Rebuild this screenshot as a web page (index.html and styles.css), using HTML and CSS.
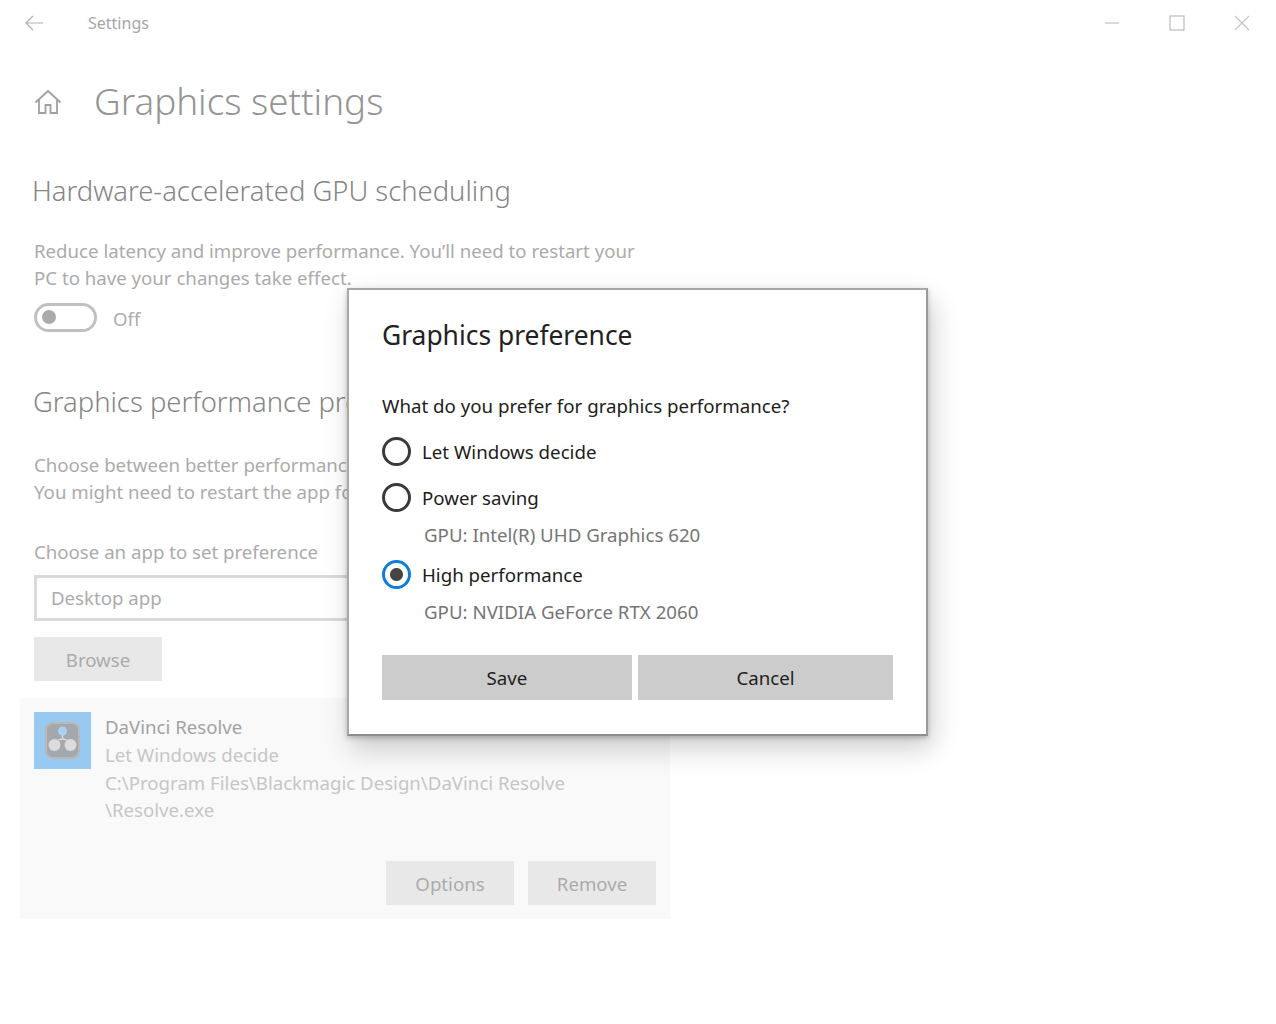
FILE: index.html
```html
<!DOCTYPE html>
<html lang="en">
<head>
<meta charset="utf-8">
<title>Settings</title>
<link rel="stylesheet" href="styles.css">
</head>
<body>
<div class="window">
  <header class="titlebar">
    <svg class="back" width="20" height="16" viewBox="0 0 20 16"><path d="M19 8H2M9 1L2 8l7 7" fill="none" stroke="#b0b0b0" stroke-width="1.200"/></svg>
    <span class="app-name">Settings</span>
    <div class="controls">
      <svg width="16" height="16" viewBox="0 0 16 16"><path d="M1 8h14" stroke="#c4c4c4" stroke-width="1.200"/></svg>
      <svg width="16" height="16" viewBox="0 0 16 16"><rect x="1" y="1" width="14" height="14" fill="none" stroke="#bbb" stroke-width="1.200"/></svg>
      <svg width="16" height="16" viewBox="0 0 16 16"><path d="M1 1l14 14M15 1L1 15" stroke="#c4c4c4" stroke-width="1.100"/></svg>
    </div>
  </header>
  <main class="content">
    <div class="page-head">
      <svg class="home" width="28" height="28" viewBox="0 0 28 28"><path d="M1.500 14.500L14 3l12.500 11.500M5 11.500V25h6.500v-8h5v8H23V11.500" fill="none" stroke="#a0a0a0" stroke-width="1.800"/></svg>
      <h1>Graphics settings</h1>
    </div>
    <h2 class="hw">Hardware-accelerated GPU scheduling</h2>
    <p class="desc first">Reduce latency and improve performance. You’ll need to restart your<br>PC to have your changes take effect.</p>
    <div class="toggle-row">
      <span class="toggle"><span class="knob"></span></span>
      <span class="toggle-label">Off</span>
    </div>
    <h2 class="perf">Graphics performance preference</h2>
    <p class="desc second">Choose between better performance or battery life when using an app.<br>You might need to restart the app for your changes to take effect.</p>
    <p class="desc chooser">Choose an app to set preference</p>
    <div class="select">Desktop app</div>
    <button class="btn browse">Browse</button>
    <section class="app-card">
      <div class="app-top">
        <div class="app-icon">
          <svg width="57" height="57" viewBox="0 0 57 57">
            <rect x="12" y="11" width="33" height="35" rx="7" fill="#a3a8ac" stroke="#b8b8b8" stroke-width="2"/>
            <circle cx="28.500" cy="19" r="4.500" fill="#a9d0f2"/>
            <circle cx="20.500" cy="33" r="6" fill="#dcdcdc"/>
            <circle cx="36.500" cy="33" r="6" fill="#dcdcdc"/>
            <path d="M28.500 23v5M24 28l4.500-1 4.500 1" fill="none" stroke="#d8d8d8" stroke-width="1.500"/>
          </svg>
        </div>
        <div class="app-text">
          <div class="app-name-line">DaVinci Resolve</div>
          <div class="app-sub">Let Windows decide</div>
          <div class="app-sub path">C:\Program Files\Blackmagic Design\DaVinci Resolve<br>\Resolve.exe</div>
        </div>
      </div>
      <div class="app-actions">
        <button class="btn">Options</button>
        <button class="btn">Remove</button>
      </div>
    </section>
  </main>
  <div class="dialog">
    <h3>Graphics preference</h3>
    <p class="question">What do you prefer for graphics performance?</p>
    <div class="option"><span class="radio"></span>Let Windows decide</div>
    <div class="option saving"><span class="radio"></span>Power saving</div>
    <div class="gpu">GPU: Intel(R) UHD Graphics 620</div>
    <div class="option high"><span class="radio on"></span>High performance</div>
    <div class="gpu">GPU: NVIDIA GeForce RTX 2060</div>
    <div class="dialog-actions">
      <button class="dbtn save">Save</button>
      <button class="dbtn cancel">Cancel</button>
    </div>
  </div>
</div>
</body>
</html>
```
FILE: styles.css
```css
* { box-sizing: border-box; }
html, body { margin: 0; padding: 0; background: #fff; }
body { font-family: "Noto Sans", "Open Sans", sans-serif; }
.window { position: relative; width: 1276px; height: 1024px; overflow: hidden; background: #fff; }
.titlebar { display: flex; align-items: center; height: 46px; padding-left: 24px; }
.back { margin-right: 44px; }
.app-name { font-size: 16px; color: #a6a6a6; }
.controls { display: flex; gap: 49px; margin-left: auto; margin-right: 26px; }
.content { width: 670px; padding: 0 0 0 20px; }
.page-head { display: flex; align-items: center; height: 60px; margin-top: 25px; padding-left: 14px; }
.home { margin-right: 32px; position: relative; top: 1px; }
h1 { margin: 0; font-size: 36.800px; font-weight: 300; color: #959595; white-space: nowrap; line-height: 60px; }
h2 { margin: 0; font-size: 27.400px; font-weight: 300; color: #858585; white-space: nowrap; line-height: 36px; }
.hw { margin-top: 42px; padding-left: 12px; }
.perf { margin-top: 52px; padding-left: 13px; }
.desc { margin: 0; padding-left: 14px; font-size: 18.650px; font-weight: 400; line-height: 27px; color: #ababab; white-space: nowrap; }
.first { margin-top: 28px; }
.toggle-row { display: flex; align-items: center; margin-top: 11px; padding-left: 14px; height: 30px; }
.toggle { display: flex; align-items: center; width: 63px; height: 29px; padding-left: 5px; border: 3px solid #c0c0c0; border-radius: 15px; }
.knob { width: 14px; height: 14px; border-radius: 50%; background: #ababab; }
.toggle-label { margin-left: 16px; padding-top: 2px; font-size: 18.650px; color: #adadad; }
.second { margin-top: 31px; }
.chooser { margin-top: 33px; }
.select { margin: 10px 0 0 14px; width: 400px; height: 46px; padding-left: 14px; border: 3px solid #dadada; font-size: 18.650px; line-height: 40px; color: #ababab; }
.btn { width: 128px; height: 44px; padding-top: 2px; border: 0; background: #e8e8e8; color: #ababab; font: 400 18.650px "Noto Sans", "Open Sans", sans-serif; }
.browse { display: block; margin: 16px 0 0 14px; }
.app-card { width: 650px; height: 221px; margin-top: 17px; background: #f9f9f9; padding: 14px; }
.app-top { display: flex; height: 149px; }
.app-icon { width: 57px; height: 57px; background: #98c9f1; flex: none; }
.app-icon svg { display: block; }
.app-text { margin-left: 14px; font-size: 18.650px; line-height: 27px; white-space: nowrap; }
.app-name-line { color: #a2a2a2; line-height: 29px; }
.app-sub { color: #c6c6c6; }
.app-sub.path { margin-top: 1px; }
.app-actions { display: flex; justify-content: flex-end; gap: 14px; }
.dialog { position: absolute; left: 347px; top: 288px; width: 581px; height: 448px; background: #fff; border: 2px solid #a8a8a8; border-bottom-color: #8e8e8e; border-right-color: #9a9a9a; padding: 0 33px; box-shadow: 0 2px 5px rgba(0,0,0,.22), 4px 12px 26px rgba(0,0,0,.2); color: #1c1c1c; }
h3 { margin: 26px 0 0; font-size: 26.400px; font-weight: 400; line-height: 38px; color: #222; }
.question { margin: 39px 0 0; font-size: 18.700px; line-height: 26px; font-weight: 400; white-space: nowrap; }
.option { display: flex; align-items: center; height: 30px; font-size: 18.700px; margin-top: 17px; }
.option.saving { margin-top: 16px; }
.option.high { margin-top: 11px; }
.radio { width: 29px; height: 29px; border: 3px solid #3a3a3a; border-radius: 50%; margin-right: 11px; flex: none; }
.radio.on { border-color: #0f7cd8; background: radial-gradient(circle, #444 0 6px, #fff 7px); }
.gpu { font-size: 18.700px; line-height: 26px; color: #757575; margin-top: 10px; padding-left: 42px; white-space: nowrap; }
.dialog-actions { display: flex; gap: 6px; margin-top: 30px; }
.dbtn { height: 45px; border: 0; background: #cccccc; color: #1f1f1f; font: 400 18.700px "Noto Sans", "Open Sans", sans-serif; }
.save { width: 250px; }
.cancel { width: 255px; }
```
